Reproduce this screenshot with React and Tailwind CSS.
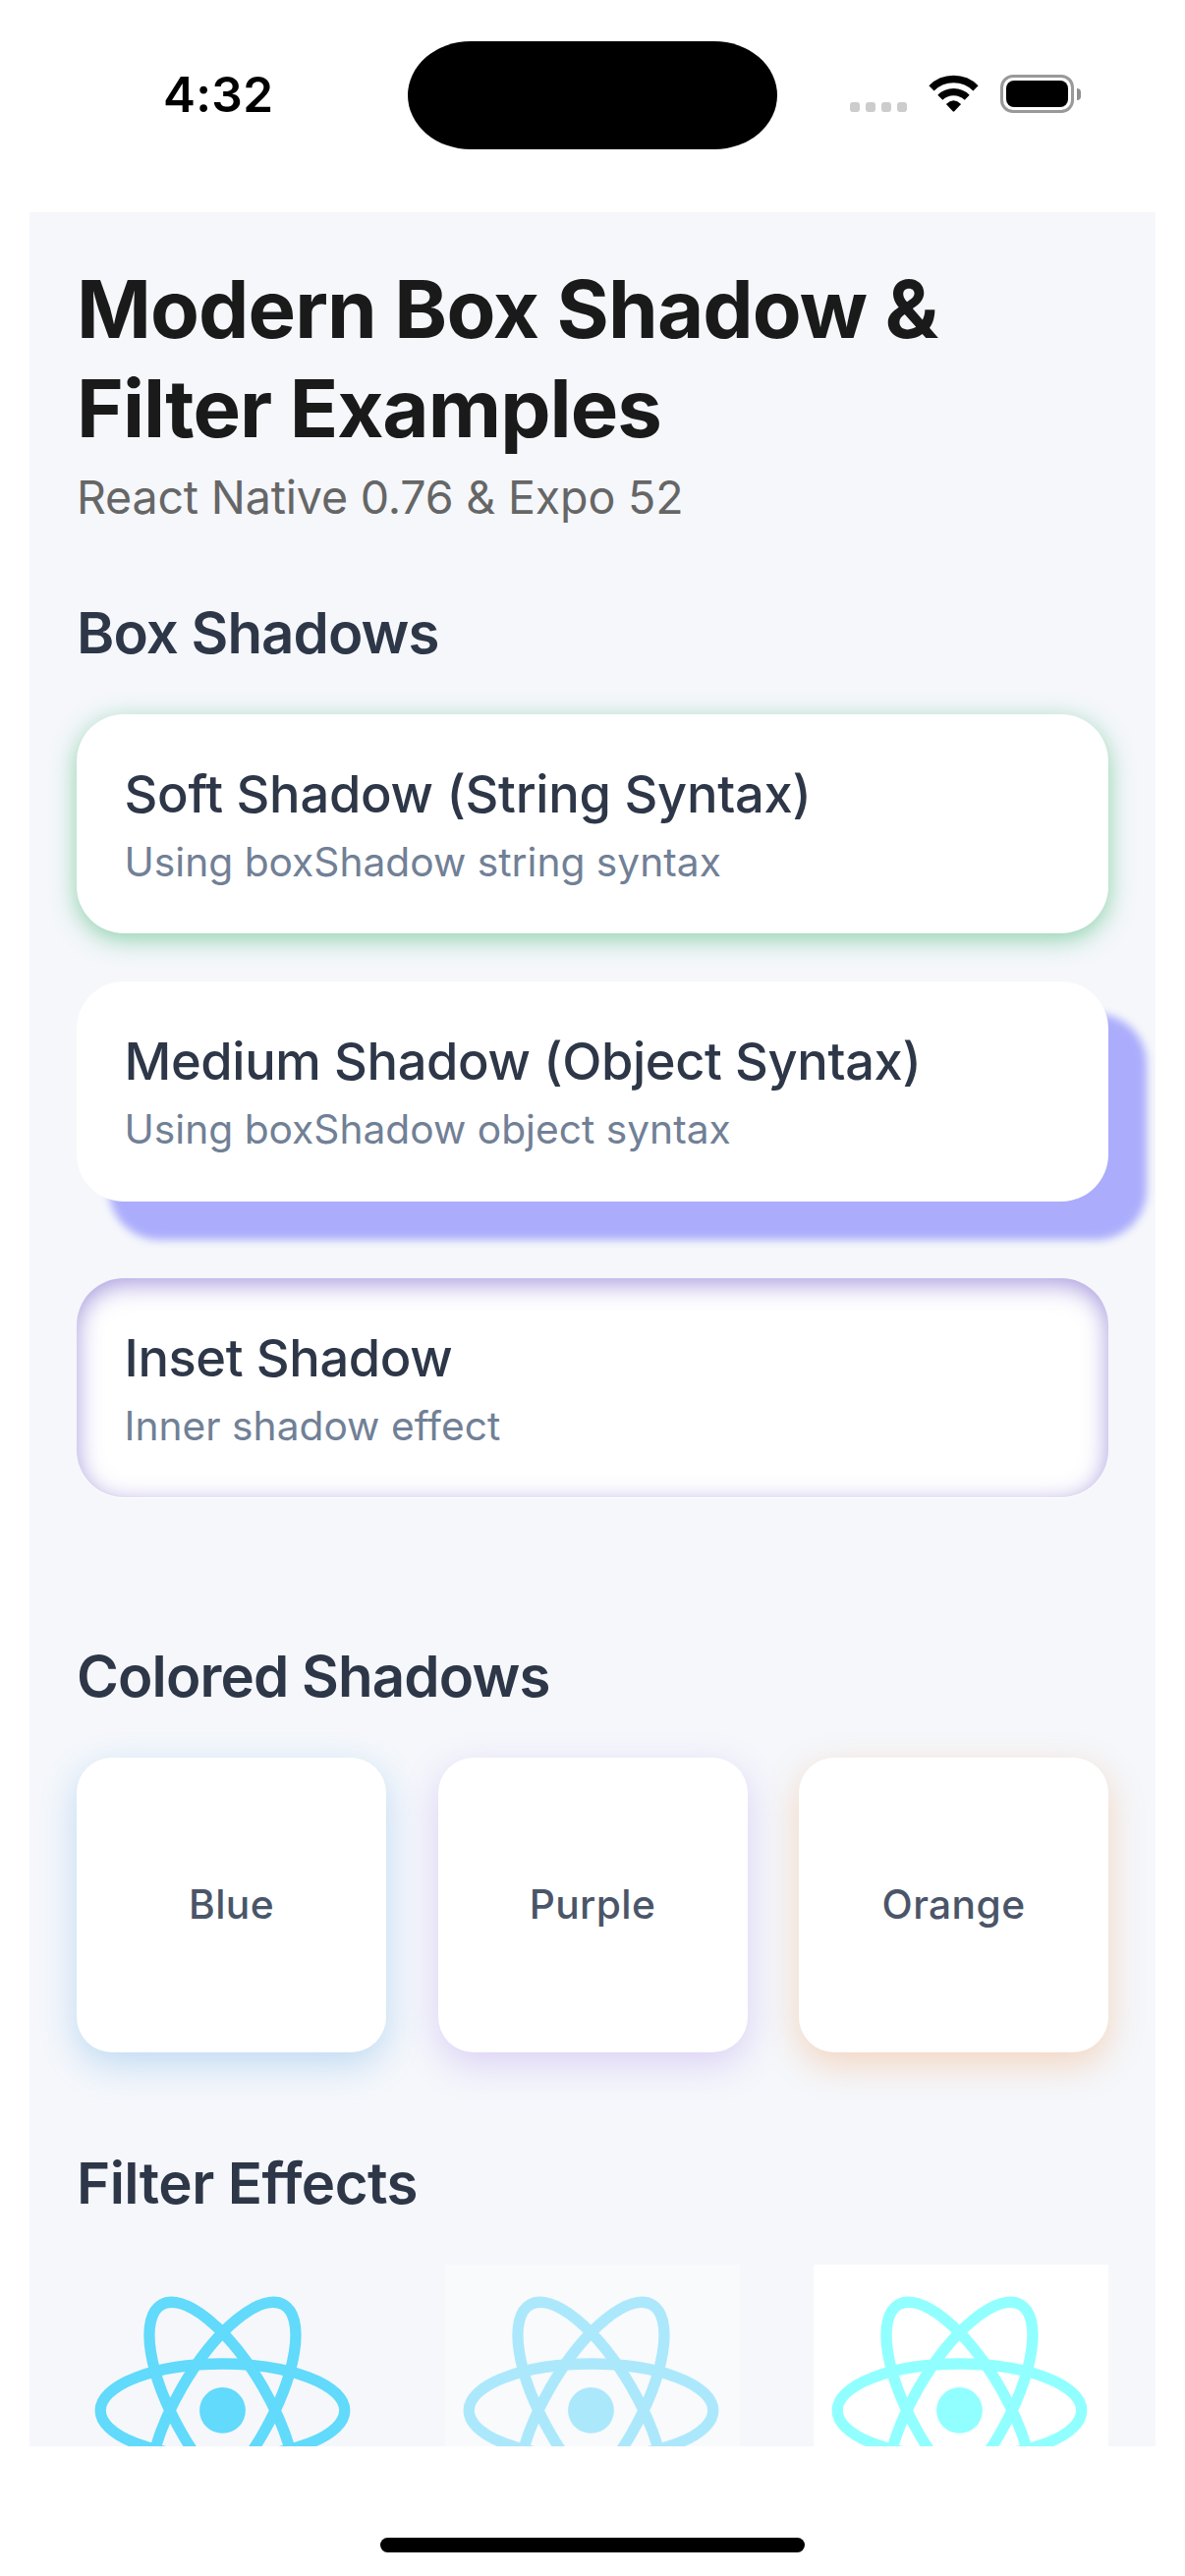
import React from "react";

function StatusBar() {
  return (
    <header className="flex h-[216px] shrink-0 items-start">
      <div className="mt-[66px] w-[415px] pl-[166px] text-[49.5px] font-semibold leading-[60px] tracking-[0.3px] text-black">
        4:32
      </div>
      <div className="mt-[42px] h-[110px] w-[376px] rounded-[64px/55px] bg-black" />
      <div className="ml-[74px] mt-[104px] flex gap-[6px]">
        <span className="size-[10px] rounded-[3px] bg-[#cccccc]" />
        <span className="size-[10px] rounded-[3px] bg-[#cccccc]" />
        <span className="size-[10px] rounded-[3px] bg-[#cccccc]" />
        <span className="size-[10px] rounded-[3px] bg-[#cccccc]" />
      </div>
      <svg className="ml-[22px] mt-[76px] h-[39px] w-[51px]" viewBox="0 0 51 39" fill="none">
        <path d="M3 13.8 A32 32 0 0 1 48 13.8" stroke="#000" strokeWidth="7.4" />
        <path d="M11.8 23.2 A19.6 19.6 0 0 1 39.2 23.2" stroke="#000" strokeWidth="7.2" />
        <path d="M17.9 30 Q25.5 22.6 33.1 30 L26.3 37.3 Q25.5 38 24.7 37.3 Z" fill="#000" />
      </svg>
      <div className="ml-[22px] mt-[76px] flex items-center">
        <div className="h-[39px] w-[75px] rounded-[13px] border-[3px] border-[#999999] p-[3px]">
          <div className="h-full w-full rounded-[8px] bg-black" />
        </div>
        <div className="ml-[3px] h-[12px] w-[4px] rounded-r-full bg-[#8f8f8f]" />
      </div>
    </header>
  );
}

function ShadowCard({ title, text, titleClass, className }) {
  return (
    <div className={`rounded-[48px] bg-white pl-[48.5px] pr-[47.5px] pt-[49px] ${className}`}>
      <h3 className={`whitespace-nowrap text-[52.4px] font-medium leading-[65px] text-[#2d3748] ${titleClass}`}>{title}</h3>
      <p className="mt-[12px] text-[40.73px] leading-[50px] text-[#718096]">{text}</p>
    </div>
  );
}

function ColorCard({ label, className }) {
  return (
    <div
      className={`flex h-[300px] w-[315px] items-center justify-center rounded-[36px] bg-white text-[40.73px] font-medium leading-[50px] tracking-[0.4px] text-[#4a5568] ${className}`}
    >
      {label}
    </div>
  );
}

function SectionTitle({ children, className }) {
  return (
    <h2 className={`mb-[47px] text-[58.2px] font-semibold leading-[72px] text-[#2d3748] ${className}`}>
      {children}
    </h2>
  );
}

function ReactLogo({ className }) {
  return (
    <div className={`size-[300px] ${className}`}>
      <svg className="size-[300px]" viewBox="-13.14 -13.14 26.55 26.55" fill="none" stroke="currentColor">
        <circle r="2.07" fill="currentColor" stroke="none" />
        <ellipse rx="11" ry="4.2" />
        <ellipse rx="11" ry="4.2" transform="rotate(60)" />
        <ellipse rx="11" ry="4.2" transform="rotate(120)" />
      </svg>
    </div>
  );
}

export default function App() {
  return (
    <div className="flex h-[2622px] w-[1206px] flex-col overflow-hidden bg-white font-[Inter,sans-serif]">
      <StatusBar />
      <main className="mx-[30px] h-[2274px] shrink-0 overflow-hidden bg-[#f5f7fb] px-[48px] pt-[48px] [font-variant-ligatures:none]">
        <h1 className="text-[81.5px] font-bold leading-[101px] text-[#1a1a1a]">
          <span className="block tracking-[-0.9px]">Modern Box Shadow &amp;</span>
          <span className="block tracking-[-0.95px]">Filter Examples</span>
        </h1>
        <p className="mt-[12px] text-[46.55px] leading-[57px] tracking-[-0.18px] text-[#666666]">
          React Native 0.76 &amp; Expo 52
        </p>

        <section className="mt-[73px]">
          <SectionTitle className="tracking-[-0.95px]">Box Shadows</SectionTitle>
          <ShadowCard
            title="Soft Shadow (String Syntax)"
            text="Using boxShadow string syntax"
            titleClass="tracking-[-0.25px]"
            className="h-[223px] shadow-[0_6px_24px_rgba(39,174,96,0.5)]"
          />
          <ShadowCard
            title="Medium Shadow (Object Syntax)"
            text="Using boxShadow object syntax"
            titleClass="tracking-[-0.37px]"
            className="mt-[49px] h-[224px] shadow-[36px_36px_9px_3px_rgba(0,0,255,0.3)]"
          />
          <ShadowCard
            title="Inset Shadow"
            text="Inner shadow effect"
            titleClass="tracking-[-0.38px]"
            className="mt-[78px] h-[223px] shadow-[inset_0_6px_24px_rgba(81,55,189,0.5),0_1px_0_#ffffff]"
          />
        </section>

        <section className="mt-[146px]">
          <SectionTitle className="tracking-[-0.88px]">Colored Shadows</SectionTitle>
          <div className="flex justify-between">
            <ColorCard label="Blue" className="shadow-[0_12px_36px_rgba(66,153,225,0.3)]" />
            <ColorCard label="Purple" className="shadow-[0_12px_36px_rgba(159,122,234,0.3)]" />
            <ColorCard label="Orange" className="shadow-[0_12px_36px_rgba(237,137,54,0.3)]" />
          </div>
        </section>

        <section className="mt-[97px]">
          <SectionTitle className="tracking-[-0.55px]">Filter Effects</SectionTitle>
          <div className="flex justify-between">
            <ReactLogo className="text-[#61dafb]" />
            <ReactLogo className="bg-[#f8fafc] text-[#ace8fc]" />
            <ReactLogo className="bg-white text-[#91ffff]" />
          </div>
        </section>
      </main>
      <div className="mx-auto mt-[93px] h-[15px] w-[432px] rounded-full bg-black" />
    </div>
  );
}
